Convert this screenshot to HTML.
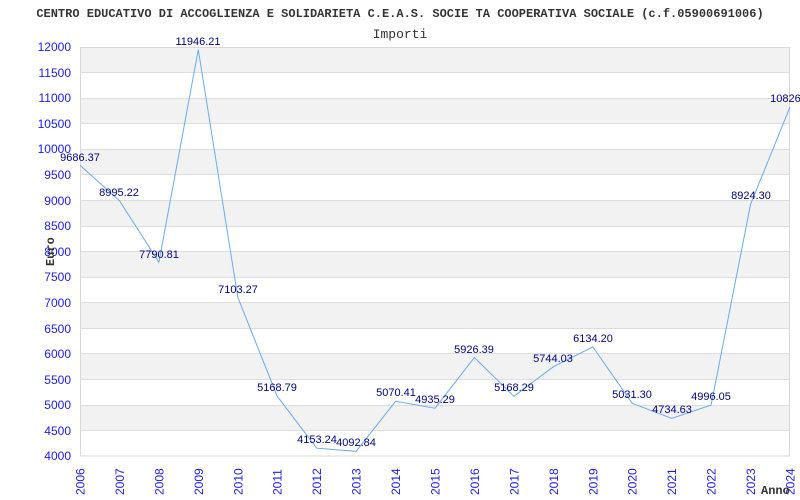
<!DOCTYPE html>
<html><head><meta charset="utf-8"><style>
html,body{margin:0;padding:0;background:#fff;}
svg{display:block;}
</style></head><body>
<svg width="800" height="500" xmlns="http://www.w3.org/2000/svg" font-family="Liberation Sans, sans-serif">
<rect width="800" height="500" fill="#fff"/>
<text x="400" y="17" text-anchor="middle" font-family="Liberation Mono, monospace" font-size="12" font-weight="bold" fill="#333">CENTRO EDUCATIVO DI ACCOGLIENZA E SOLIDARIETA C.E.A.S. SOCIE TA COOPERATIVA SOCIALE (c.f.05900691006)</text>
<text x="400" y="38" text-anchor="middle" font-family="Liberation Mono, monospace" font-size="13" fill="#333">Importi</text>
<g id="bands"></g>
<g fill="#f2f2f2">
<rect x="80" y="47" width="710" height="25.56"/>
<rect x="80" y="98.1" width="710" height="25.56"/>
<rect x="80" y="149.3" width="710" height="25.56"/>
<rect x="80" y="200.4" width="710" height="25.56"/>
<rect x="80" y="251.5" width="710" height="25.56"/>
<rect x="80" y="302.6" width="710" height="25.56"/>
<rect x="80" y="353.8" width="710" height="25.56"/>
<rect x="80" y="404.9" width="710" height="25.56"/>
</g>
<g stroke="#ddd" stroke-width="1">
<line x1="80" x2="790" y1="72.5" y2="72.5"/><line x1="80" x2="790" y1="98.5" y2="98.5"/>
<line x1="80" x2="790" y1="123.5" y2="123.5"/><line x1="80" x2="790" y1="149.5" y2="149.5"/>
<line x1="80" x2="790" y1="174.5" y2="174.5"/><line x1="80" x2="790" y1="200.5" y2="200.5"/>
<line x1="80" x2="790" y1="226.5" y2="226.5"/><line x1="80" x2="790" y1="251.5" y2="251.5"/>
<line x1="80" x2="790" y1="277.5" y2="277.5"/><line x1="80" x2="790" y1="302.5" y2="302.5"/>
<line x1="80" x2="790" y1="328.5" y2="328.5"/><line x1="80" x2="790" y1="353.5" y2="353.5"/>
<line x1="80" x2="790" y1="379.5" y2="379.5"/><line x1="80" x2="790" y1="405.5" y2="405.5"/>
<line x1="80" x2="790" y1="430.5" y2="430.5"/>
</g>
<rect x="80.5" y="47.5" width="709" height="408.5" fill="none" stroke="#d8d8d8"/>
<g font-size="12" fill="#1a1aee" text-anchor="end">
<text x="71" y="51">12000</text><text x="71" y="77">11500</text><text x="71" y="102">11000</text>
<text x="71" y="128">10500</text><text x="71" y="153">10000</text><text x="71" y="179">9500</text>
<text x="71" y="205">9000</text><text x="71" y="230">8500</text><text x="71" y="256">8000</text>
<text x="71" y="281">7500</text><text x="71" y="307">7000</text><text x="71" y="333">6500</text>
<text x="71" y="358">6000</text><text x="71" y="384">5500</text><text x="71" y="409">5000</text>
<text x="71" y="435">4500</text><text x="71" y="460">4000</text>
</g>
<g font-size="12" fill="#1a1aee">
<text transform="translate(84.5,495) rotate(-90)">2006</text>
<text transform="translate(123.9,495) rotate(-90)">2007</text>
<text transform="translate(163.4,495) rotate(-90)">2008</text>
<text transform="translate(202.8,495) rotate(-90)">2009</text>
<text transform="translate(242.3,495) rotate(-90)">2010</text>
<text transform="translate(281.7,495) rotate(-90)">2011</text>
<text transform="translate(321.2,495) rotate(-90)">2012</text>
<text transform="translate(360.6,495) rotate(-90)">2013</text>
<text transform="translate(400,495) rotate(-90)">2014</text>
<text transform="translate(439.5,495) rotate(-90)">2015</text>
<text transform="translate(478.9,495) rotate(-90)">2016</text>
<text transform="translate(518.4,495) rotate(-90)">2017</text>
<text transform="translate(557.8,495) rotate(-90)">2018</text>
<text transform="translate(597.3,495) rotate(-90)">2019</text>
<text transform="translate(636.7,495) rotate(-90)">2020</text>
<text transform="translate(676.2,495) rotate(-90)">2021</text>
<text transform="translate(715.6,495) rotate(-90)">2022</text>
<text transform="translate(755.1,495) rotate(-90)">2023</text>
<text transform="translate(794.5,495) rotate(-90)">2024</text>
</g>
<text transform="translate(54,266) rotate(-90)" font-family="Liberation Mono, monospace" font-size="12" font-weight="bold" fill="#333">Euro</text>
<text x="761" y="494" font-family="Liberation Mono, monospace" font-size="12" font-weight="bold" fill="#333">Anno</text>
<polyline fill="none" stroke="#6aaaee" stroke-width="1" points="80,165.3 119.4,200.6 158.9,262.2 198.3,49.7 237.8,297.3 277.2,396.2 316.7,448.2 356.1,451.3 395.6,401.3 435,408.2 474.4,357.5 513.9,396.3 553.3,366.8 592.8,346.9 632.2,403.3 671.7,418.4 711.1,405.1 750.6,204.2 790,107"/>
<g font-size="11" fill="#000080" text-anchor="middle">
<text x="80" y="161">9686.37</text>
<text x="119" y="196">8995.22</text>
<text x="159" y="258">7790.81</text>
<text x="198" y="45">11946.21</text>
<text x="238" y="293">7103.27</text>
<text x="277" y="391">5168.79</text>
<text x="317" y="443">4153.24</text>
<text x="356" y="446">4092.84</text>
<text x="396" y="396">5070.41</text>
<text x="435" y="403">4935.29</text>
<text x="474" y="353">5926.39</text>
<text x="514" y="391">5168.29</text>
<text x="553" y="362">5744.03</text>
<text x="593" y="342">6134.20</text>
<text x="632" y="398">5031.30</text>
<text x="672" y="413">4734.63</text>
<text x="711" y="400">4996.05</text>
<text x="751" y="199">8924.30</text>
<text x="790" y="102">10826.0</text>
</g>
</svg>
</body></html>
